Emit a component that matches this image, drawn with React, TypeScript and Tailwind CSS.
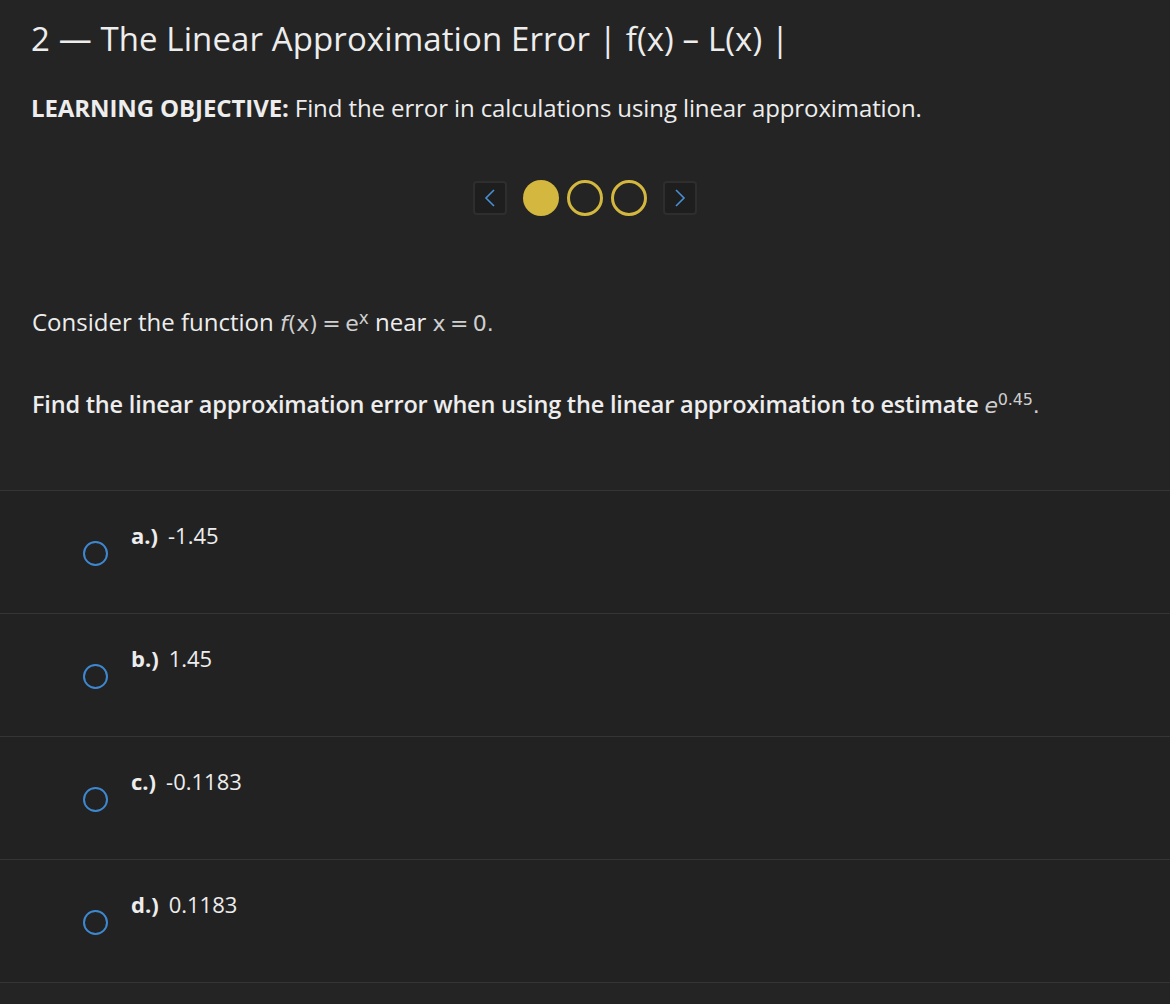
export default function App() {
  const options = [
    { k: "a.)", v: "-1.45" },
    { k: "b.)", v: "1.45" },
    { k: "c.)", v: "-0.1183" },
    { k: "d.)", v: "0.1183" },
  ];

  const math = { fontFamily: "'DejaVu Sans', sans-serif", fontSize: 22 };

  return (
    <main
      className="w-[1170px] h-[1004px] overflow-hidden bg-[#242424] text-[#ededed]"
      style={{ fontFamily: "'Open Sans', sans-serif" }}
    >
      <div className="px-[31px] pt-[17px]">
        <h1 className="text-[33px] leading-[44px] font-normal tracking-[0.1px]">
          2 — The Linear Approximation Error | f(x) – L(x) |
        </h1>
        <p className="mt-[33px] text-[24px] leading-[28px] tracking-[-0.1px]">
          <span className="font-bold">LEARNING OBJECTIVE:</span> Find the error in calculations using linear approximation.
        </p>
      </div>

      {/* pager */}
      <div className="mt-[58px] flex items-center justify-center gap-[8px]">
        <button className="mr-[8px] w-[34px] h-[34px] rounded-[4px] border-2 border-[#2e2e2e] bg-[#1e1e1e] flex items-center justify-center">
          <svg width="14" height="20" viewBox="0 0 14 20" fill="none" stroke="#4a8fd4" strokeWidth="1.6">
            <path d="M11 2 L3 10 L11 18" />
          </svg>
        </button>
        <span className="w-[36px] h-[36px] rounded-full bg-[#d4b73e]" />
        <span className="w-[36px] h-[36px] rounded-full border-[3px] border-[#d4b73e]" />
        <span className="w-[36px] h-[36px] rounded-full border-[3px] border-[#d4b73e]" />
        <button className="ml-[8px] w-[34px] h-[34px] rounded-[4px] border-2 border-[#2e2e2e] bg-[#1e1e1e] flex items-center justify-center">
          <svg width="14" height="20" viewBox="0 0 14 20" fill="none" stroke="#4a8fd4" strokeWidth="1.6">
            <path d="M3 2 L11 10 L3 18" />
          </svg>
        </button>
      </div>

      <div className="px-[32px] mt-[92px] text-[24px] leading-[28px]">
        <p className="flex items-baseline">
          Consider the function&nbsp;
          <span className="text-[#cfcfcf]" style={math}>
            <i>f</i>(x)&thinsp;=&thinsp;e<sup className="text-[17px] relative -top-[7px]">x</sup>
          </span>
          &nbsp;near&nbsp;
          <span className="text-[#cfcfcf]" style={math}>
            x&thinsp;=&thinsp;0.
          </span>
        </p>
        <p className="mt-[52px] text-[23.5px] font-semibold tracking-[-0.2px]">
          Find the linear approximation error when using the linear approximation to estimate{" "}
          <span className="font-normal text-[#cfcfcf]" style={math}>
            <i>e</i>
            <sup className="text-[16px] relative -top-[8px]">0.45</sup>.
          </span>
        </p>
      </div>

      <div className="mt-[70px] border-t border-[#353535] bg-[#222222]">
        {options.map((o) => (
          <div key={o.k} className="h-[123px] border-b border-[#353535] flex">
            <div className="w-[131px] pl-[83px] pt-[50px]">
              <span className="block w-[25px] h-[25px] rounded-full border-[2.5px] border-[#3d88d0]" />
            </div>
            <div className="pt-[30px] text-[22px] leading-[28px]">
              <span className="font-bold">{o.k}</span>
              <span className="ml-[10px]">{o.v}</span>
            </div>
          </div>
        ))}
      </div>
    </main>
  );
}
